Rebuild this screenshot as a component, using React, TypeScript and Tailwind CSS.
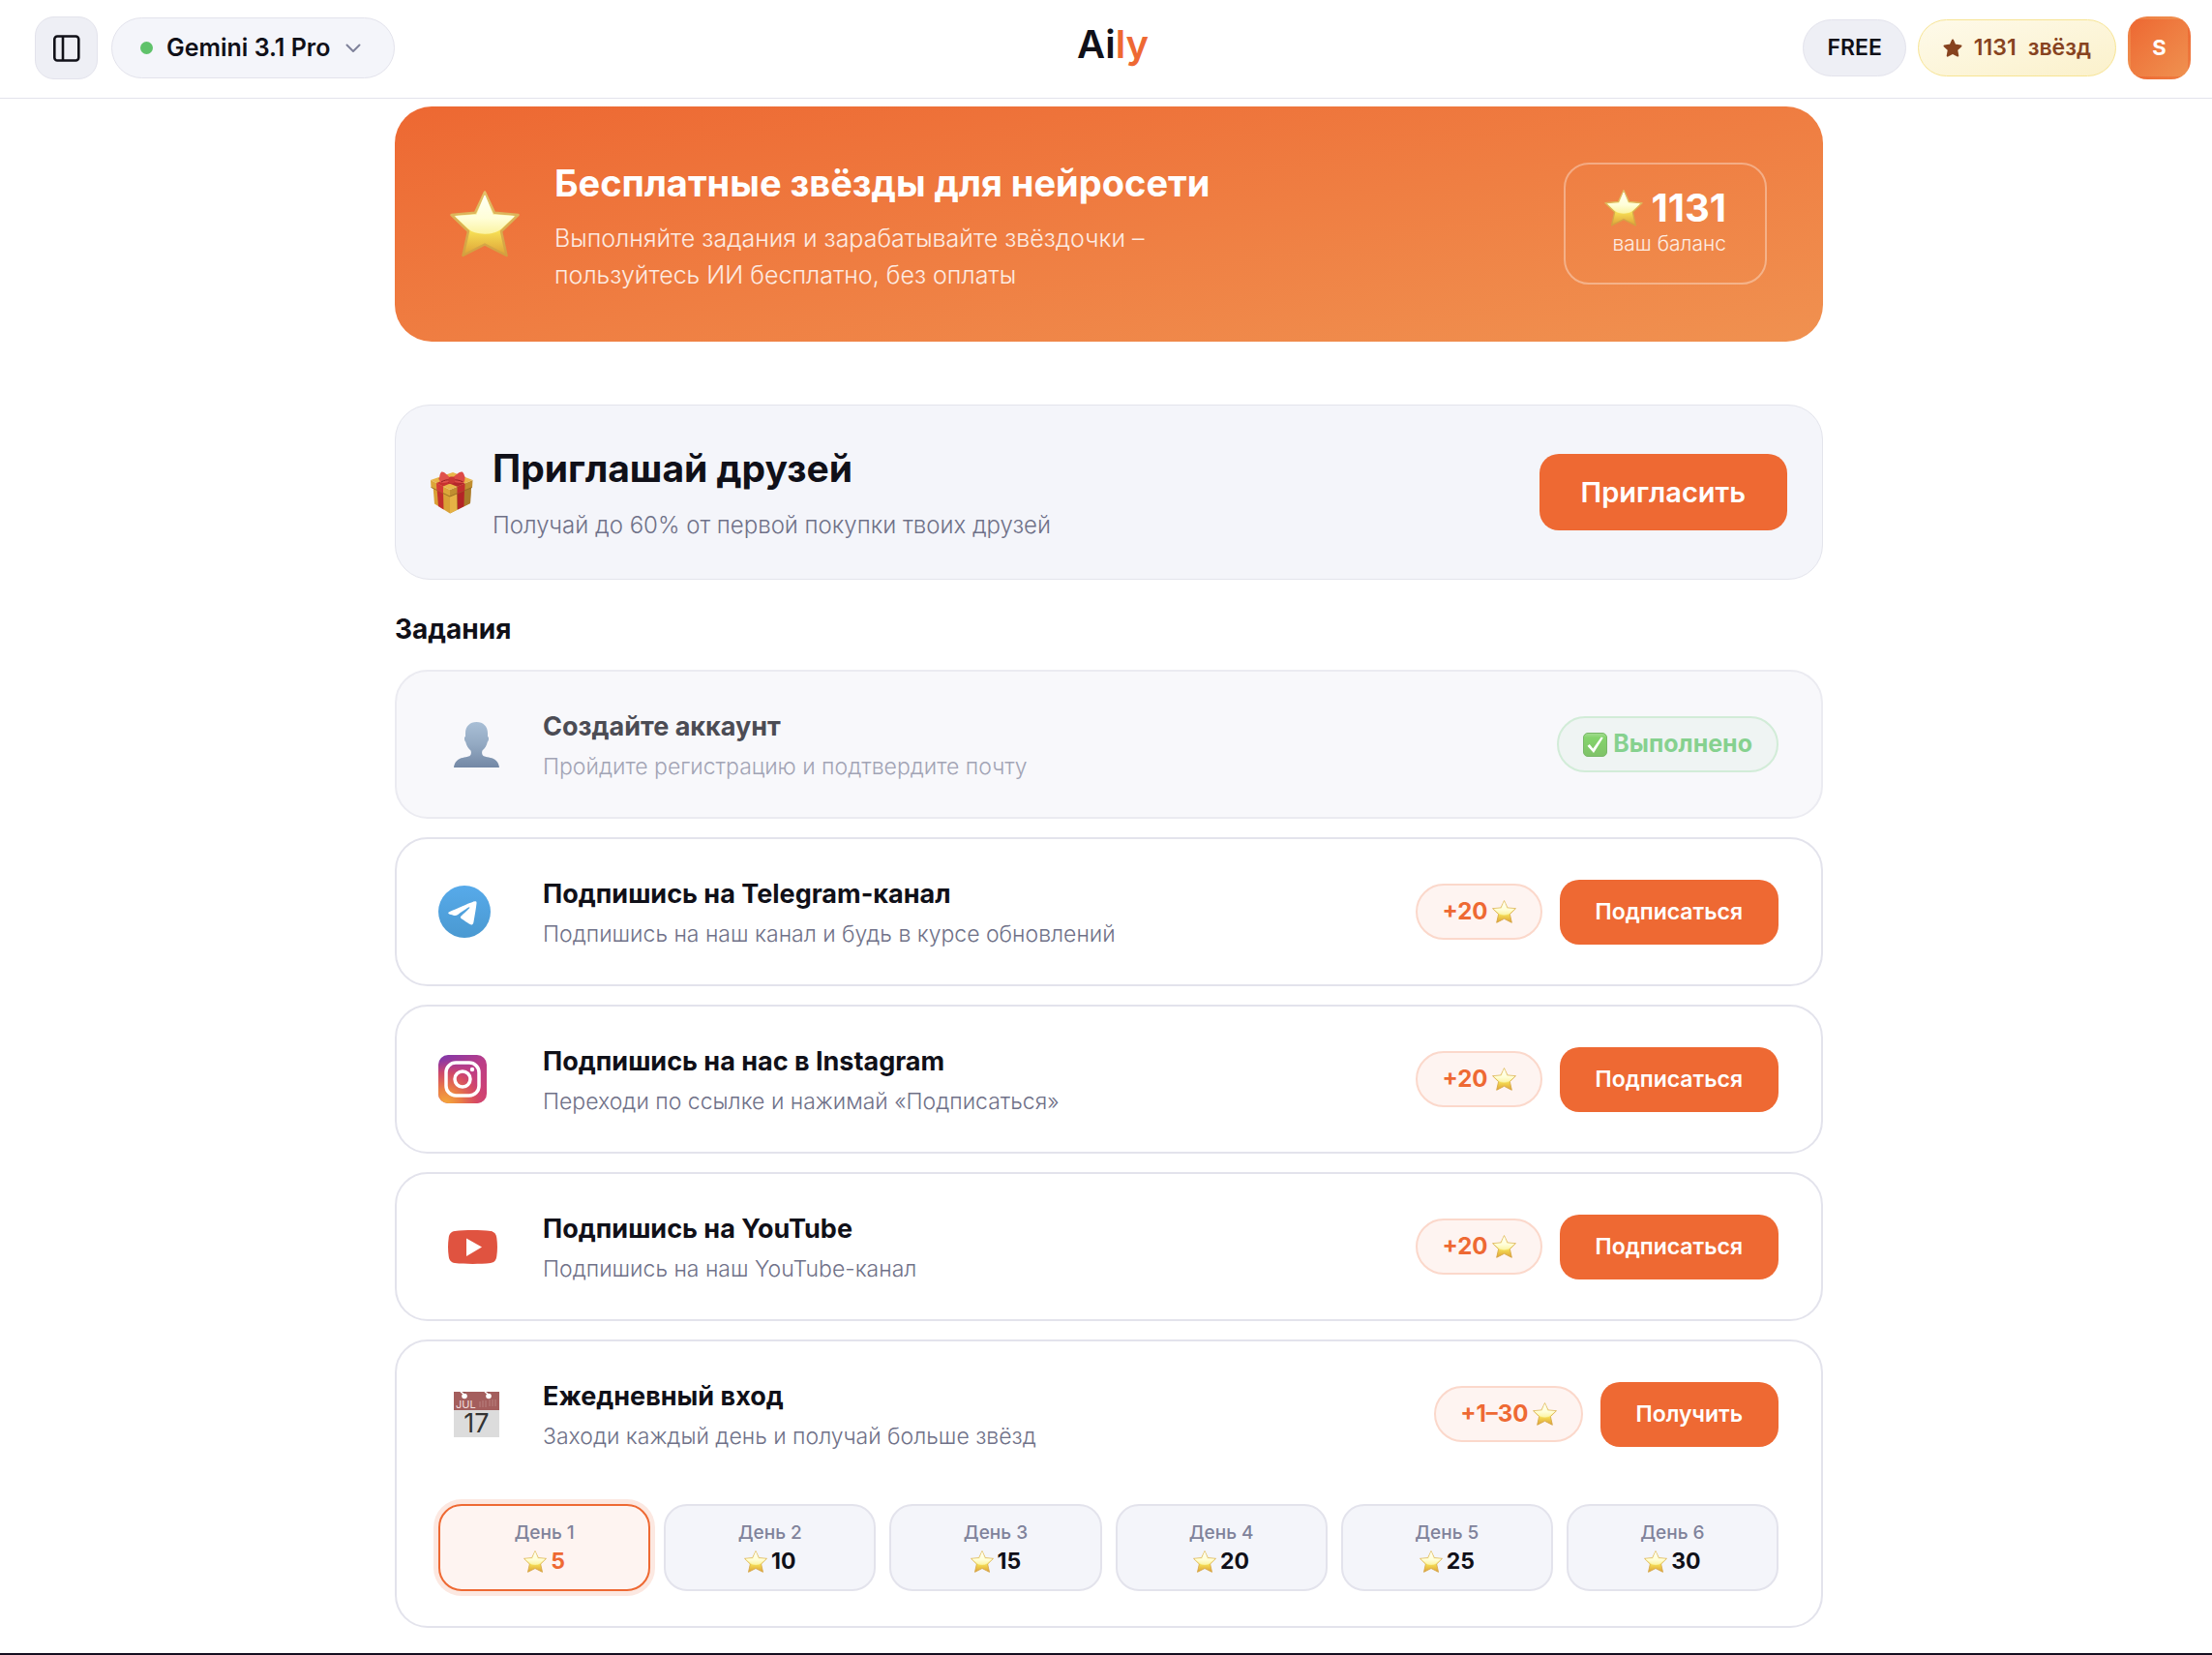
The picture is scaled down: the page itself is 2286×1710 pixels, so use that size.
import React, { useId } from "react";

type IconProps = { className?: string };

function StarEmoji({ className = "" }: IconProps) {
  const id = useId();
  return (
    <svg viewBox="0 0 72 69" className={`shrink-0 ${className}`} aria-hidden="true">
      <defs>
        <linearGradient id={`${id}b`} x1="0" y1="0" x2="0" y2="1">
          <stop offset="0" stopColor="#f6e7a0" />
          <stop offset="0.35" stopColor="#f8ee9a" />
          <stop offset="0.62" stopColor="#f6df55" />
          <stop offset="1" stopColor="#dda136" />
        </linearGradient>
        <linearGradient id={`${id}s`} x1="0" y1="0" x2="0" y2="1">
          <stop offset="0" stopColor="#e2c069" />
          <stop offset="1" stopColor="#d3a03f" />
        </linearGradient>
        <linearGradient id={`${id}g`} x1="0" y1="0" x2="0" y2="1">
          <stop offset="0" stopColor="#fffff4" />
          <stop offset="0.6" stopColor="#fffed8" />
          <stop offset="1" stopColor="#fbf4a4" />
        </linearGradient>
      </defs>
      <path
        d="M36 1.500 L46 22.800 L70.500 25 L53 42 L58.500 67 L36 55.500 L13.500 67 L19 42 L1.500 25 L26 22.800 Z"
        fill={`url(#${id}b)`}
        stroke={`url(#${id}s)`}
        strokeWidth="2.500"
        strokeLinejoin="round"
      />
      <path
        d="M36 5.500 L44 25.200 L65.500 26.700 L52.500 39 C46 45.500 26 45.500 19.500 39 L6.500 26.700 L28 25.200 Z"
        fill={`url(#${id}g)`}
        stroke={`url(#${id}g)`}
        strokeWidth="1.500"
        strokeLinejoin="round"
      />
    </svg>
  );
}

function GiftEmoji({ className = "" }: IconProps) {
  return (
    <svg viewBox="0 0 44 44" className={`shrink-0 ${className}`} aria-hidden="true">
      <path d="M2.500 15 L20 24 L20 43.500 L4 33.500 Z" fill="#d9a136" />
      <path d="M20 24 L42 15 L41 33 L20 43.500 Z" fill="#b8862c" />
      <path d="M20 24 L27 21 L27 40 L20 43.500 Z" fill="#e6b245" />
      <path d="M35 18 L42 15 L41 33 L34.500 36.300 Z" fill="#a97a2a" />
      <path d="M6.500 17 L13 20 L13.500 39.500 L8 36 Z" fill="#c32f2c" />
      <path d="M27.500 21 L35 18 L34.500 36.300 L28 39.500 Z" fill="#b32427" />
      <path d="M0 9 L20 19 L20 26 L0.500 16.500 Z" fill="#dca63a" />
      <path d="M20 19 L43.500 9 L43 16.500 L20 26 Z" fill="#c08e30" />
      <path d="M0 9 L23 1 L43.500 9 L20 19 Z" fill="#e9b64a" />
      <path d="M20 26 L0.500 16.500 M20 26 L43 16.500" stroke="#8f6520" strokeWidth="0.800" />
      <path d="M6 12 L13 15.500 L13 22.700 L6.300 19.300 Z" fill="#d43a36" />
      <path d="M27.500 15.800 L35.500 12.500 L35.300 19.700 L27.500 22.900 Z" fill="#c22d2e" />
      <path d="M6 12 L30 3.500 L36 6 L13 15.500 Z" fill="#c8322f" />
      <path d="M12 5 L35.500 12.500 L27.500 15.800 L8 8 Z" fill="#b4272b" />
      <path
        d="M21 8 C17 3 13 -0.500 11 0.800 C9 3 8.500 9 10 11.500 C13 12.500 18 12 21 10 Z"
        fill="#e0524c"
      />
      <path
        d="M22 8 C26 3 31 -0.500 33 0.800 C35.500 3 36 9 34.500 11.500 C31 12.500 26 12 22 10 Z"
        fill="#dd4a46"
      />
      <path d="M11 11 C14 9 17 8.500 20 9 M33.500 11 C30 9 26 8.500 23 9" stroke="#962023" strokeWidth="1" fill="none" />
      <rect x="18.500" y="5.500" width="6.500" height="7" rx="2.500" fill="#c93735" />
    </svg>
  );
}

function PersonEmoji() {
  return (
    <svg viewBox="0 0 47 47" className="size-[47px]" aria-hidden="true">
      <defs>
        <linearGradient id="personFill" x1="0" y1="0" x2="0" y2="1">
          <stop offset="0" stopColor="#a9bfd6" />
          <stop offset="0.500" stopColor="#93a9c2" />
          <stop offset="1" stopColor="#7388a5" />
        </linearGradient>
      </defs>
      <path
        d="M23.500 0 C30.500 0 35 4.500 35 11.500 L35 15 C36.500 15.500 36.300 19 34.800 20.500 C34 24.500 32 27.500 29.500 29.500 C28.800 31.500 29 33 30 34.500 C32 36.500 37 36 41 38 C45 40 46.500 43 47 47 L0 47 C0.500 43 2 40 6 38 C10 36 15 36.500 17 34.500 C18 33 18.200 31.500 17.500 29.500 C15 27.500 13 24.500 12.200 20.500 C10.700 19 10.500 15.500 12 15 L12 11.500 C12 4.500 16.500 0 23.500 0 Z"
        fill="url(#personFill)"
      />
    </svg>
  );
}

function TelegramIcon() {
  return (
    <svg viewBox="0 0 24 24" className="size-[54px]" aria-hidden="true">
      <defs>
        <linearGradient id="telegramFill" x1="0" y1="0" x2="0" y2="1">
          <stop offset="0" stopColor="#57aaea" />
          <stop offset="1" stopColor="#4a99d1" />
        </linearGradient>
      </defs>
      <circle cx="12" cy="12" r="12" fill="url(#telegramFill)" />
      <path
        fill="#fff"
        d="M16.906 7.224c.1-.002.321.023.465.14a.506.506 0 0 1 .171.325c.016.093.036.306.02.472-.18 1.898-.962 6.502-1.36 8.627-.168.9-.499 1.201-.82 1.23-.696.065-1.225-.46-1.9-.902-1.056-.693-1.653-1.124-2.678-1.8-1.185-.78-.417-1.21.258-1.91.177-.184 3.247-2.977 3.307-3.23.007-.032.014-.15-.056-.212s-.174-.041-.249-.024c-.106.024-1.793 1.14-5.061 3.345-.48.33-.913.49-1.302.48-.428-.008-1.252-.241-1.865-.44-.752-.245-1.349-.374-1.297-.789.027-.216.325-.437.893-.663 3.498-1.524 5.83-2.529 6.998-3.014 3.332-1.386 4.025-1.627 4.476-1.635z"
      />
    </svg>
  );
}

function InstagramIcon() {
  return (
    <svg viewBox="0 0 50 50" className="size-[50px]" aria-hidden="true">
      <defs>
        <linearGradient id="igBase" x1="0.100" y1="0" x2="0.700" y2="1">
          <stop offset="0" stopColor="#8238a8" />
          <stop offset="0.450" stopColor="#bb3d88" />
          <stop offset="1" stopColor="#cf4272" />
        </linearGradient>
        <radialGradient id="igGlow" cx="0.150" cy="1" r="0.900">
          <stop offset="0" stopColor="#f5a93a" />
          <stop offset="0.350" stopColor="#ea7d45" />
          <stop offset="0.700" stopColor="#d94e5e" stopOpacity="0.800" />
          <stop offset="1" stopColor="#c93c7c" stopOpacity="0" />
        </radialGradient>
      </defs>
      <rect width="50" height="50" rx="10" fill="url(#igBase)" />
      <rect width="50" height="50" rx="10" fill="url(#igGlow)" />
      <rect x="8" y="8" width="34" height="34" rx="10" fill="none" stroke="#fff" strokeWidth="3.500" />
      <circle cx="25" cy="25" r="8" fill="none" stroke="#fff" strokeWidth="3.500" />
      <circle cx="35" cy="15" r="2.200" fill="#fff" />
    </svg>
  );
}

function YouTubeIcon() {
  return (
    <svg viewBox="0 0 59 35" className="h-[35px] w-[59px]" aria-hidden="true">
      <path
        d="M7 1 C18 -0.200 33 -0.200 44 1 C48 1.500 49.800 4 50.300 8 C51.200 14 51.200 21 50.300 27 C49.800 31 48 33.500 44 34 C33 35.200 18 35.200 7 34 C3 33.500 1.200 31 0.700 27 C-0.200 21 -0.200 14 0.700 8 C1.200 4 3 1.500 7 1 Z"
        fill="#e05340"
      />
      <path d="M19 8.500 L35 17.500 L19 27 Z" fill="#fff" />
    </svg>
  );
}

function CalendarEmoji() {
  return (
    <svg viewBox="0 0 47 47" className="size-[47px] overflow-visible" aria-hidden="true">
      <rect width="47" height="47" fill="#dcdcdc" />
      <rect width="47" height="19" fill="#a45e5d" />
      <path d="M11 0 V5 M36 0 V5" stroke="#8e4b4a" strokeWidth="2" />
      <path d="M7 0 L11 3 M32 0 L36 3" stroke="#fff" strokeWidth="1.500" />
      <circle cx="11" cy="4.500" r="2.800" fill="#fff" />
      <circle cx="36" cy="4.500" r="2.800" fill="#fff" />
      <path d="M27 10 V16 M30 9 V16 M33 9 V16 M37 8 V15 M40 8 V15 M43 8 V15" stroke="#b98180" strokeWidth="1" />
      <text x="2" y="16.500" fontSize="11" fill="#f1dfdf" fontFamily="Inter, sans-serif">
        JUL
      </text>
      <text x="23.500" y="42" fontSize="27" textAnchor="middle" fill="#333" fontFamily="Inter, sans-serif">
        17
      </text>
    </svg>
  );
}

function CheckEmoji() {
  return (
    <svg viewBox="0 0 25 25" className="size-[25px] shrink-0" aria-hidden="true">
      <defs>
        <linearGradient id="checkFill" x1="0" y1="0" x2="0" y2="1">
          <stop offset="0" stopColor="#a5dc92" />
          <stop offset="0.200" stopColor="#84d46c" />
          <stop offset="1" stopColor="#7fc268" />
        </linearGradient>
      </defs>
      <rect x="0.500" y="0.500" width="24" height="24" rx="4.500" fill="url(#checkFill)" stroke="#78b868" />
      <path d="M4.500 13.800 L6.800 12 L10.300 16.500 L18.800 4.500 L20.800 5.300 L11 21 Z" fill="#fff" />
    </svg>
  );
}

function SidebarIcon() {
  return (
    <svg viewBox="0 0 28 28" className="size-7" fill="none" stroke="#111118" strokeWidth="2.600" aria-hidden="true">
      <rect x="1.300" y="1.500" width="25" height="25" rx="3" />
      <path d="M10 1.500 V26.500" />
    </svg>
  );
}

function SolidStar() {
  return (
    <svg viewBox="0 0 20 20" className="size-5 shrink-0" aria-hidden="true">
      <path
        d="M10 1.500 L12.300 6.600 L18.500 7.400 L14.200 11.400 L15.300 17.600 L10 14.800 L4.700 17.600 L5.800 11.400 L1.500 7.400 L7.700 6.600 Z"
        fill="#87431f"
        stroke="#87431f"
        strokeWidth="2"
        strokeLinejoin="round"
      />
    </svg>
  );
}

function Header() {
  return (
    <header className="grid grid-cols-[1fr_auto_1fr] items-center border-b border-[#e3e3ec] bg-white pt-[17px] pr-[22px] pb-[19px] pl-9">
      <div className="flex items-center gap-3.5">
        <button
          type="button"
          aria-label="Боковая панель"
          className="flex size-[65px] items-center justify-center rounded-[20px] border border-[#e3e3ec] bg-[#eeeff5]"
        >
          <SidebarIcon />
        </button>
        <button
          type="button"
          className="flex h-[63px] items-center rounded-full border border-[#e3e3ec] bg-[#f4f5fa] pr-[34px] pl-[29px] text-[25px] font-semibold"
        >
          <span className="mr-3.5 size-[13px] rounded-full bg-[#5fc26a]" />
          Gemini 3.1 Pro
          <svg viewBox="0 0 16 10" className="ml-4 h-2.5 w-4" fill="none" aria-hidden="true">
            <path d="M1.500 1.500 L8 8 L14.500 1.500" stroke="#7f829a" strokeWidth="2" strokeLinecap="round" strokeLinejoin="round" />
          </svg>
        </button>
      </div>
      <a href="#home" className="self-start text-[40px] leading-[58px] font-semibold">
        Ai<span className="text-[#ee6933]">ly</span>
      </a>
      <div className="flex items-center justify-end gap-3">
        <span className="flex h-[59px] items-center rounded-full border border-[#e3e3ec] bg-[#eeeff5] px-6 text-[23px] font-semibold">
          FREE
        </span>
        <button
          type="button"
          className="flex h-[59px] items-center gap-3 rounded-full border border-[#f7e493] bg-linear-to-br from-[#fefaea] to-[#fbf1cb] px-[25px] text-[23px] font-semibold text-[#87431f]"
        >
          <SolidStar />
          <span>1131</span>
          <span>звёзд</span>
        </button>
        <button
          type="button"
          aria-label="Профиль"
          className="flex size-[65px] items-center justify-center rounded-[20px] border-[3px] border-transparent bg-linear-135 from-[#ed6832] to-[#ef9150] text-[22px] font-bold text-white"
        >
          S
        </button>
      </div>
    </header>
  );
}

function Hero() {
  return (
    <section className="flex items-center rounded-[38px] bg-linear-to-br from-[#ed6832] to-[#f09150] py-[50px] pr-[58px] pl-[57px] text-white">
      <StarEmoji className="mr-9 h-[69px] w-[72px]" />
      <div className="grow">
        <h1 className="text-[38px] leading-[58px] font-bold">Бесплатные звёзды для нейросети</h1>
        <p className="mt-[9px] text-[25px] leading-[38px] font-light text-white/85">
          Выполняйте задания и зарабатывайте звёздочки –<br />
          пользуйтесь ИИ бесплатно, без оплаты
        </p>
      </div>
      <div className="mb-0.5 flex h-[126px] flex-col items-end rounded-[26px] border-2 border-white/35 px-10 pt-5">
        <div className="flex items-center gap-2 text-[40px] leading-[50px] font-bold">
          <StarEmoji className="h-[38px] w-10" />
          1131
        </div>
        <div className="text-[21px] leading-6 font-light text-white/85">ваш баланс</div>
      </div>
    </section>
  );
}

function Invite() {
  return (
    <section className="flex items-center rounded-[36px] border border-[#e3e4ec] bg-[#f4f5fa] px-9 py-9">
      <GiftEmoji className="mr-5 size-11" />
      <div className="grow">
        <h2 className="text-[39px] leading-[58px] font-bold">Приглашай друзей</h2>
        <p className="mt-[11px] text-2xl leading-[38px] font-light text-[#6f7188]">
          Получай до 60% от первой покупки твоих друзей
        </p>
      </div>
      <button type="button" className="h-[79px] rounded-[20px] bg-[#ee6933] px-[43px] text-[29px] font-semibold text-white">
        Пригласить
      </button>
    </section>
  );
}

type TaskRowProps = {
  icon: React.ReactNode;
  emoji?: boolean;
  title: string;
  text: string;
  done?: boolean;
  children: React.ReactNode;
};

function TaskRow({ icon, emoji, title, text, done, children }: TaskRowProps) {
  return (
    <div className="flex h-[150px] items-center">
      <div className={emoji ? "flex w-[78px] justify-center" : "flex w-[78px]"}>{icon}</div>
      <div className="ml-[30px] grow pt-1.5">
        <h3 className={done ? "text-[27px] leading-10 font-bold text-[#4c4c54]" : "text-[27px] leading-10 font-bold"}>
          {title}
        </h3>
        <p
          className={
            done
              ? "text-[23px] leading-[42px] font-light text-[#a2a4b5]"
              : "text-[23px] leading-[42px] font-light text-[#6f7188]"
          }
        >
          {text}
        </p>
      </div>
      <div className="flex items-center gap-[18px]">{children}</div>
    </div>
  );
}

function Reward({ label }: { label: string }) {
  return (
    <span className="flex h-[58px] items-center gap-1 rounded-full border-2 border-[#fbd8cb] bg-[#fef4f1] px-[25px] text-2xl font-bold text-[#ee6933]">
      {label}
      <StarEmoji className="h-6 w-[25px]" />
    </span>
  );
}

function Action({ label }: { label: string }) {
  return (
    <button type="button" className="h-[67px] rounded-[20px] bg-[#ee6933] px-[37px] text-[23px] font-semibold text-white">
      {label}
    </button>
  );
}

const subscriptions = [
  {
    icon: <TelegramIcon />,
    title: "Подпишись на Telegram-канал",
    text: "Подпишись на наш канал и будь в курсе обновлений",
  },
  {
    icon: <InstagramIcon />,
    title: "Подпишись на нас в Instagram",
    text: "Переходи по ссылке и нажимай «Подписаться»",
  },
  {
    icon: <YouTubeIcon />,
    emoji: true,
    title: "Подпишись на YouTube",
    text: "Подпишись на наш YouTube-канал",
  },
];

const days = [5, 10, 15, 20, 25, 30];

export default function App() {
  return (
    <div className="min-h-screen bg-white font-['Inter','Noto_Sans',sans-serif] text-[#101018]">
      <Header />
      <main className="pt-2 pb-[26px] pl-1.5">
        <div className="mx-auto max-w-[1476px]">
          <Hero />
          <div className="mt-[65px]">
            <Invite />
          </div>
          <h2 className="mt-[31px] mb-[22px] text-[28px] leading-10 font-bold">Задания</h2>
          <div className="flex flex-col gap-[19px]">
            <article className="rounded-[34px] border-2 border-[#ebebf1] bg-[#f8f8fb] pr-11 pl-[43px]">
              <TaskRow icon={<PersonEmoji />} emoji done title="Создайте аккаунт" text="Пройдите регистрацию и подтвердите почту">
                <span className="flex h-[58px] items-center gap-1.5 rounded-full border-2 border-[#d2ecd8] bg-[#eff4f3] px-[25px] text-[25px] font-bold text-[#86d18f]">
                  <CheckEmoji />
                  Выполнено
                </span>
              </TaskRow>
            </article>
            {subscriptions.map((task) => (
              <article key={task.title} className="rounded-[34px] border-2 border-[#e3e3ec] bg-white pr-11 pl-[43px]">
                <TaskRow icon={task.icon} emoji={task.emoji} title={task.title} text={task.text}>
                  <Reward label="+20" />
                  <Action label="Подписаться" />
                </TaskRow>
              </article>
            ))}
            <article className="rounded-[34px] border-2 border-[#e3e3ec] bg-white pr-11 pb-9 pl-[43px]">
              <TaskRow icon={<CalendarEmoji />} emoji title="Ежедневный вход" text="Заходи каждый день и получай больше звёзд">
                <Reward label="+1–30" />
                <Action label="Получить" />
              </TaskRow>
              <ul className="mt-[18px] grid grid-cols-6 gap-3.5">
                {days.map((stars, i) => (
                  <li
                    key={stars}
                    className={
                      i === 0
                        ? "flex h-[90px] flex-col items-center justify-center rounded-3xl border-2 border-[#ee6933] bg-[#fef4f1] text-[#ee6933] ring-[5px] ring-[#fce8e1]"
                        : "flex h-[90px] flex-col items-center justify-center rounded-3xl border-2 border-[#e3e3ec] bg-[#f4f5fa]"
                    }
                  >
                    <span className="text-[19px] leading-7 font-medium text-[#7f829a]">День {i + 1}</span>
                    <span className="flex items-center gap-1 text-[23px] leading-[30px] font-bold">
                      <StarEmoji className="h-[23px] w-6" />
                      {stars}
                    </span>
                  </li>
                ))}
              </ul>
            </article>
          </div>
        </div>
      </main>
      <footer className="h-0.5 bg-[#150f20]" />
    </div>
  );
}
